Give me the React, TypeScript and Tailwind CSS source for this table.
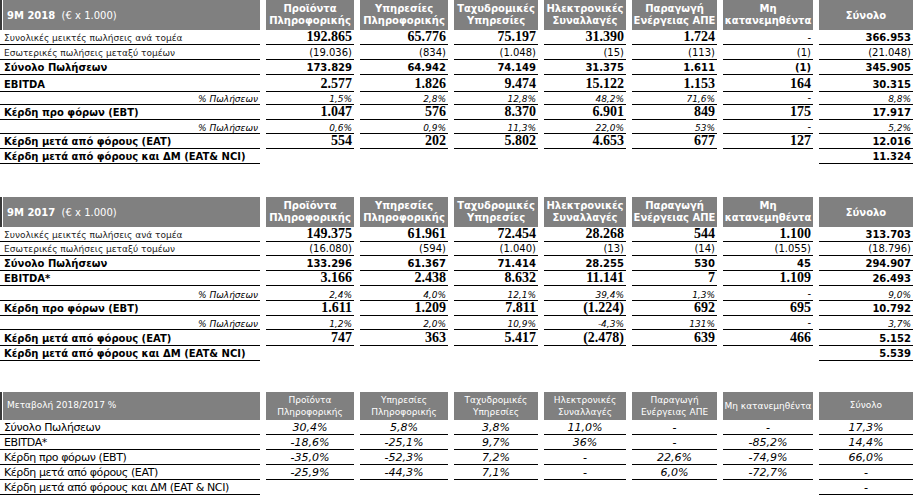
import React from "react";

type Kind = "tb" | "r" | "b" | "i";
type Cell = [string, Kind] | null;

type Row = {
  label: string;
  kind: "reg" | "bold" | "pct";
  h: number;
  cells: Cell[];
  noLine?: boolean;
};

const grid = "grid grid-cols-[260px_88px_88px_84px_82px_85px_90px_94px] gap-x-[6px]";
const sans = "font-['DejaVu_Sans',sans-serif]";

const heads = [
  ["Προϊόντα", "Πληροφορικής"],
  ["Υπηρεσίες", "Πληροφορικής"],
  ["Ταχυδρομικές", "Υπηρεσίες"],
  ["Ηλεκτρονικές", "Συναλλαγές"],
  ["Παραγωγή", "Ενέργειας ΑΠΕ"],
  ["Μη", "κατανεμηθέντα"],
];

const rows2018: Row[] = [
  {
    label: "Συνολικές μεικτές πωλήσεις ανά τομέα", kind: "reg", h: 15,
    cells: [["192.865", "tb"], ["65.776", "tb"], ["75.197", "tb"], ["31.390", "tb"], ["1.724", "tb"], ["-", "r"], ["366.953", "b"]],
  },
  {
    label: "Εσωτερικές πωλήσεις μεταξύ τομέων", kind: "reg", h: 15,
    cells: [["(19.036)", "r"], ["(834)", "r"], ["(1.048)", "r"], ["(15)", "r"], ["(113)", "r"], ["(1)", "r"], ["(21.048)", "r"]],
  },
  {
    label: "Σύνολο Πωλήσεων", kind: "bold", h: 15,
    cells: [["173.829", "b"], ["64.942", "b"], ["74.149", "b"], ["31.375", "b"], ["1.611", "b"], ["(1)", "b"], ["345.905", "b"]],
  },
  {
    label: "EBITDA", kind: "bold", h: 17,
    cells: [["2.577", "tb"], ["1.826", "tb"], ["9.474", "tb"], ["15.122", "tb"], ["1.153", "tb"], ["164", "tb"], ["30.315", "b"]],
  },
  {
    label: "% Πωλήσεων", kind: "pct", h: 13,
    cells: [["1,5%", "i"], ["2,8%", "i"], ["12,8%", "i"], ["48,2%", "i"], ["71,6%", "i"], ["-", "r"], ["8,8%", "i"]],
  },
  {
    label: "Κέρδη προ φόρων (EBT)", kind: "bold", h: 15,
    cells: [["1.047", "tb"], ["576", "tb"], ["8.370", "tb"], ["6.901", "tb"], ["849", "tb"], ["175", "tb"], ["17.917", "b"]],
  },
  {
    label: "% Πωλήσεων", kind: "pct", h: 14,
    cells: [["0,6%", "i"], ["0,9%", "i"], ["11,3%", "i"], ["22,0%", "i"], ["53%", "i"], ["-", "r"], ["5,2%", "i"]],
  },
  {
    label: "Κέρδη μετά από φόρους (EAT)", kind: "bold", h: 15,
    cells: [["554", "tb"], ["202", "tb"], ["5.802", "tb"], ["4.653", "tb"], ["677", "tb"], ["127", "tb"], ["12.016", "b"]],
  },
  {
    label: "Κέρδη μετά από φόρους και ΔΜ (EAT& NCI)", kind: "bold", h: 15, noLine: true,
    cells: [null, null, null, null, null, null, ["11.324", "b"]],
  },
];

const rows2017: Row[] = [
  {
    label: "Συνολικές μεικτές πωλήσεις ανά τομέα", kind: "reg", h: 15,
    cells: [["149.375", "tb"], ["61.961", "tb"], ["72.454", "tb"], ["28.268", "tb"], ["544", "tb"], ["1.100", "tb"], ["313.703", "b"]],
  },
  {
    label: "Εσωτερικές πωλήσεις μεταξύ τομέων", kind: "reg", h: 14,
    cells: [["(16.080)", "r"], ["(594)", "r"], ["(1.040)", "r"], ["(13)", "r"], ["(14)", "r"], ["(1.055)", "r"], ["(18.796)", "r"]],
  },
  {
    label: "Σύνολο Πωλήσεων", kind: "bold", h: 15,
    cells: [["133.296", "b"], ["61.367", "b"], ["71.414", "b"], ["28.255", "b"], ["530", "b"], ["45", "b"], ["294.907", "b"]],
  },
  {
    label: "EBITDA*", kind: "bold", h: 15,
    cells: [["3.166", "tb"], ["2.438", "tb"], ["8.632", "tb"], ["11.141", "tb"], ["7", "tb"], ["1.109", "tb"], ["26.493", "b"]],
  },
  {
    label: "% Πωλήσεων", kind: "pct", h: 15,
    cells: [["2,4%", "i"], ["4,0%", "i"], ["12,1%", "i"], ["39,4%", "i"], ["1,3%", "i"], ["-", "r"], ["9,0%", "i"]],
  },
  {
    label: "Κέρδη προ φόρων (EBT)", kind: "bold", h: 15,
    cells: [["1.611", "tb"], ["1.209", "tb"], ["7.811", "tb"], ["(1.224)", "tb"], ["692", "tb"], ["695", "tb"], ["10.792", "b"]],
  },
  {
    label: "% Πωλήσεων", kind: "pct", h: 14,
    cells: [["1,2%", "i"], ["2,0%", "i"], ["10,9%", "i"], ["-4,3%", "i"], ["131%", "i"], ["-", "r"], ["3,7%", "i"]],
  },
  {
    label: "Κέρδη μετά από φόρους (EAT)", kind: "bold", h: 16,
    cells: [["747", "tb"], ["363", "tb"], ["5.417", "tb"], ["(2.478)", "tb"], ["639", "tb"], ["466", "tb"], ["5.152", "b"]],
  },
  {
    label: "Κέρδη μετά από φόρους και ΔΜ (EAT& NCI)", kind: "bold", h: 15, noLine: true,
    cells: [null, null, null, null, null, null, ["5.539", "b"]],
  },
];

const change: [string, string[]][] = [
  ["Σύνολο Πωλήσεων", ["30,4%", "5,8%", "3,8%", "11,0%", "-", "-", "17,3%"]],
  ["EBITDA*", ["-18,6%", "-25,1%", "9,7%", "36%", "-", "-85,2%", "14,4%"]],
  ["Κέρδη προ φόρων (EBT)", ["-35,0%", "-52,3%", "7,2%", "-", "22,6%", "-74,9%", "66,0%"]],
  ["Κέρδη μετά από φόρους (EAT)", ["-25,9%", "-44,3%", "7,1%", "-", "6,0%", "-72,7%", "-"]],
  ["Κέρδη μετά από φόρους και ΔΜ (EAT & NCI)", ["", "", "", "", "", "", "-"]],
];

function valueClass(k: Kind) {
  switch (k) {
    case "tb":
      return "font-['Liberation_Serif',serif] font-bold text-[14px] leading-[14px]";
    case "b":
      return `${sans} font-bold text-[10px] leading-[12px]`;
    case "i":
      return `${sans} italic text-[9px] leading-[10px]`;
    default:
      return `${sans} text-[10px] leading-[12px]`;
  }
}

function Header({ title, light, h }: { title: React.ReactNode; light?: boolean; h: string }) {
  const w = light ? "font-normal text-[9px]" : "font-bold text-[10px]";
  return (
    <div className={`${grid} ${h} text-white ${sans}`}>
      <div className="flex border-l-2 border-[#3a3a3a]">
        <div className="ml-[1px] flex flex-1 items-center bg-[#808080] pl-[4px] text-[10px]">{title}</div>
      </div>
      {heads.map((hd, i) => (
        <div key={i} className={`flex flex-col items-center justify-center bg-[#808080] leading-[12px] ${w}`}>
          {light && i === 5 ? <span>Μη κατανεμηθέντα</span> : hd.map((l) => <span key={l}>{l}</span>)}
        </div>
      ))}
      <div className={`flex items-center justify-center bg-[#808080] ${w}`}>Σύνολο</div>
    </div>
  );
}

function DataTable({ title, rows }: { title: React.ReactNode; rows: Row[] }) {
  return (
    <div className="flex flex-col">
      <Header title={title} h="h-[30px]" />
      {rows.map((r, ri) => (
        <div key={ri} className={grid} style={{ height: r.h }}>
          <div
            className={`flex items-end border-b border-black ${sans} ${
              r.kind === "pct"
                ? "justify-end pr-[2px] text-[9px] italic leading-[10px]"
                : r.kind === "bold"
                ? "pl-[4px] text-[10px] font-bold leading-[12px]"
                : "pl-[4px] text-[9px] leading-[12px] text-[#222]"
            }`}
          >
            {r.label}
          </div>
          {r.cells.map((c, ci) => {
            const line = !r.noLine || ci === 6;
            return (
              <div
                key={ci}
                className={`flex items-end justify-end pr-[2px] ${line ? "border-b border-black" : ""} ${
                  c ? valueClass(c[1]) : ""
                }`}
              >
                {c ? c[0] : ""}
              </div>
            );
          })}
        </div>
      ))}
    </div>
  );
}

function ChangeTable() {
  return (
    <div className="flex flex-col">
      <Header
        light
        h="h-[28px]"
        title={<span className="text-[9px] font-normal">Μεταβολή 2018/2017 %</span>}
      />
      {change.map(([label, vals], ri) => {
        const last = ri === change.length - 1;
        return (
          <div key={ri} className={`${grid} h-[15px]`}>
            <div
              className={`flex items-end border-b border-black pl-[4px] ${sans} text-[11px] leading-[13px] tracking-[-0.4px]`}
            >
              {label}
            </div>
            {vals.map((v, ci) => (
              <div
                key={ci}
                className={`flex items-end justify-center ${sans} text-[11px] italic leading-[13px] ${
                  !last || ci === 6 ? "border-b border-black" : ""
                }`}
              >
                {v}
              </div>
            ))}
          </div>
        );
      })}
    </div>
  );
}

export default function App() {
  return (
    <div className="h-[499px] w-[913px] overflow-hidden bg-white text-black">
      <DataTable
        title={
          <span>
            <b>9M 2018</b>
            <span className="font-normal">&nbsp; (€ x 1.000)</span>
          </span>
        }
        rows={rows2018}
      />
      <div className="mt-[33px]">
        <DataTable
          title={
            <span>
              <b>9M 2017</b>
              <span className="font-normal">&nbsp; (€ x 1.000)</span>
            </span>
          }
          rows={rows2017}
        />
      </div>
      <div className="mt-[31px]">
        <ChangeTable />
      </div>
    </div>
  );
}
